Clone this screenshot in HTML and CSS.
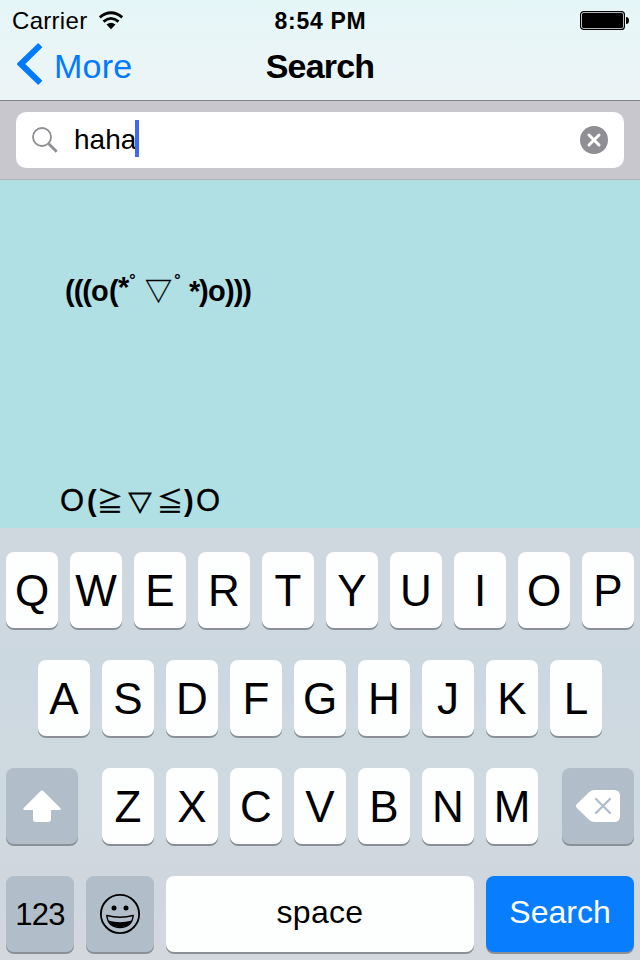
FILE: index.html
```
<!DOCTYPE html>
<html lang="en">
<head>
<meta charset="utf-8">
<title>Search</title>
<link rel="stylesheet" href="styles.css">
</head>
<body>
<header class="top">
  <div class="status">
    <div class="status-left"><span class="carrier">Carrier</span>
      <svg class="wifi" width="26" height="19" viewBox="0 0 26 19"><g fill="none" stroke="#000" stroke-width="2.8"><path d="M1.8 6.3Q13-2.8 24.2 6.3"/><path d="M5.5 10.6Q13 4.2 20.5 10.6"/></g><path d="M8.5 13.6Q13 10 17.5 13.6L13 18.3Z"/></svg>
    </div>
    <span class="time">8:54 PM</span>
    <svg class="battery" width="50" height="19" viewBox="0 0 50 19"><rect x=".6" y=".6" width="43.8" height="17.8" rx="3" fill="none" stroke="#000" stroke-width="1.2"/><rect x="2" y="2" width="41" height="15" rx="1.5"/><path d="M46 6q3 0 3 3.5t-3 3.5z"/></svg>
  </div>
  <div class="nav">
    <a class="back"><svg width="26" height="44" viewBox="0 0 26 44"><path d="M23.3 3.2L3.9 22L23.3 40.8" fill="none" stroke="#007aff" stroke-width="6"/></svg><span>More</span></a>
    <h1>Search</h1>
    <span></span>
  </div>
</header>
<div class="searchbar">
  <div class="field">
    <svg class="glass" width="26" height="26" viewBox="0 0 26 26" fill="none" stroke="#8e8e93"><circle cx="10" cy="10" r="9" stroke-width="1.8"/><path d="M16.7 16.7L24.7 24.7" stroke-width="2.8"/></svg>
    <span class="query">haha</span><span class="caret"></span>
    <svg class="clear" width="28" height="28" viewBox="0 0 28 28"><circle cx="14" cy="14" r="14" fill="#8e8e93"/><path d="M9 9L19 19M19 9L9 19" stroke="#fff" stroke-width="3" stroke-linecap="round"/></svg>
  </div>
</div>
<main class="results">
  <div class="face face-a"><span class="wa">(((</span><span class="wb">o</span><span class="wc">(</span><span class="wd star">*</span><span class="we deg">°</span><span class="wf tri">▽</span><span class="wg deg">°</span><span class="wh low">*</span><span class="wi">)</span><span class="wj">o</span><span class="wa">)))</span></div>
  <div class="face face-b"><span class="ba big">O</span><span class="bb">(</span><span class="bc sym">≧</span><span class="bd down">▽</span><span class="be sym">≦</span><span class="bf">)</span><span class="big">O</span></div>
</main>
<section class="keyboard">
  <div class="row"><b>Q</b><b>W</b><b>E</b><b>R</b><b>T</b><b>Y</b><b>U</b><b>I</b><b>O</b><b>P</b></div>
  <div class="row"><b>A</b><b>S</b><b>D</b><b>F</b><b>G</b><b>H</b><b>J</b><b>K</b><b>L</b></div>
  <div class="row">
    <b class="dark shift"><svg width="38" height="32" viewBox="0 0 38 32"><path d="M18 .8Q19 0 20 .8L37.3 18Q38.5 20 36.5 20H28V29Q28 32 25 32H13Q10 32 10 29V20H1.5Q-.5 20 .7 18Z" fill="#fff"/></svg></b>
    <b>Z</b><b>X</b><b>C</b><b>V</b><b>B</b><b>N</b><b>M</b>
    <b class="dark delete"><svg width="44" height="32" viewBox="0 0 44 32"><path d="M.7 14.3L13 2.2Q15.3 0 18.5 0H38Q44 0 44 6V26Q44 32 38 32H18.5Q15.3 32 13 29.8L.7 17.7Q-.7 16 .7 14.3Z" fill="#fff"/><path d="M20 9L34 23M34 9L20 23" stroke="#b0bdca" stroke-width="2.3" stroke-linecap="round"/></svg></b>
  </div>
  <div class="row">
    <b class="dark numbers">123</b>
    <b class="dark emoji"><svg width="40" height="40" viewBox="0 0 40 40"><circle cx="20" cy="20" r="19.1" fill="none" stroke="#000" stroke-width="1.8"/><circle cx="14" cy="14" r="2.5"/><circle cx="26" cy="14" r="2.5"/><path d="M6.8 21.5Q20 25 33.2 21.5Q32 33.5 20 33.5T6.8 21.5Z" fill="none" stroke="#000" stroke-width="1.4" stroke-linejoin="round"/><path d="M8.3 26.5Q20 29.8 31.7 26.5Q29 33.3 20 33.3T8.3 26.5Z"/></svg></b>
    <b class="space">space</b>
    <b class="go">Search</b>
  </div>
</section>
</body>
</html>
```
FILE: styles.css
```
* { box-sizing: border-box; }
body {
  margin: 0;
  width: 640px;
  height: 960px;
  display: flex;
  flex-direction: column;
  overflow: hidden;
  font-family: "Liberation Sans", sans-serif;
  color: #000;
}
svg { display: block; flex: none; }
.top {
  height: 101px;
  background: linear-gradient(#e5f6f7, #edf4f6);
  border-bottom: 1px solid #828586;
}
.status {
  height: 40px;
  display: grid;
  grid-template-columns: 1fr auto 1fr;
  align-items: center;
  padding: 0 11px 0 12px;
}
.status-left { display: flex; align-items: center; gap: 11px; }
.carrier { font-size: 24px; letter-spacing: .3px; line-height: 38px; padding-top: 2px; }
.time { font-size: 23px; font-weight: bold; letter-spacing: .7px; padding-top: 2px; }
.battery { justify-self: end; margin-right: -1px; }
.nav {
  height: 52px;
  display: grid;
  grid-template-columns: 1fr auto 1fr;
  align-items: center;
}
.back {
  display: flex;
  align-items: center;
  gap: 11px;
  margin-top: -4px;
  padding-left: 17px;
  height: 48px;
  color: #007aff;
  font-size: 34px;
  letter-spacing: .2px;
}
.back span { padding-top: 4px; }
h1 { margin: 0; font-size: 34px; line-height: 44px; letter-spacing: -.8px; }
.searchbar {
  height: 79px;
  padding: 11px 16px;
  background: #c7c7cd;
  border-bottom: 1px solid #b2b3b8;
}
.field {
  height: 56px;
  display: flex;
  align-items: center;
  padding: 0 16px;
  border-radius: 10px;
  background: #fff;
}
.query { margin-left: 16px; font-size: 28px; line-height: 40px; }
.caret { width: 4px; height: 37px; margin-top: -3px; margin-left: -1px; background: #4169f0; }
.clear { margin-left: auto; }
.results {
  height: 348px;
  background: #b0dfe4;
  padding-top: 88px;
  display: flex;
  flex-direction: column;
}
.face { display: flex; align-items: baseline; height: 46px; line-height: 46px; font-weight: bold; font-size: 29px; }
.face-a { padding-left: 65px; }
.face-b { padding-left: 60px; margin-top: 164px; }
.face span { flex: none; white-space: nowrap; }
.wa { width: 26px; letter-spacing: -1px; }
.wb { width: 18px; }
.wc { width: 9px; }
.wd { width: 11px; }
.we { width: 16px; }
.wf { width: 29px; }
.wg { width: 15px; }
.wh { width: 10px; }
.wi { width: 9px; }
.wj { width: 17px; }
.star { line-height: 1; transform: translateY(-4px); }
.deg { font-size: 17px; line-height: 1; transform: translateY(-15px); font-weight: normal; -webkit-text-stroke: .3px #000; }
.tri { font-family: "Noto Sans CJK JP", sans-serif; font-weight: normal; font-size: 27px; line-height: 1; -webkit-text-stroke: .3px #000; }
.big { font-weight: normal; font-size: 31px; -webkit-text-stroke: .3px #000; }
.ba { width: 27px; }
.bb { width: 10px; }
.bc { width: 30px; }
.bd { width: 30px; }
.be { width: 27px; }
.bf { width: 12px; }
.sym, .down { font-family: "Noto Sans CJK JP", sans-serif; font-weight: normal; font-size: 26px; line-height: 1; }
.down { font-weight: bold; -webkit-text-stroke: .8px #000; font-size: 24px; padding-left: 1px; }
.sym { -webkit-text-stroke: .4px #000; }
.keyboard {
  height: 432px;
  padding: 24px 6px 0;
  background: linear-gradient(#cfd8de, #ccd8e0 32%, #cfd9e0 65%, #d0d6de 80%, #d3d8df);
}
.row { height: 108px; display: flex; justify-content: center; gap: 12px; }
.row b {
  width: 52px;
  height: 76px;
  flex: none;
  display: flex;
  align-items: center;
  justify-content: center;
  border-radius: 8px;
  background: #fdfefe;
  box-shadow: 0 2px #8a9096;
  font-weight: normal;
  font-size: 44px;
  padding-top: 2px;
}
.row .dark { background: #b1bdc9; }
.row .shift { width: 72px; margin-right: 12px; padding: 0; }
.row .delete { width: 72px; margin-left: 12px; padding: 0; }
.row .numbers { width: 68px; font-size: 31px; letter-spacing: -.8px; }
.row .emoji { width: 68px; padding: 0; }
.row .space { width: 308px; font-size: 32px; padding: 0 0 4px; letter-spacing: .3px; }
.row .go { width: 148px; background: #087eff; color: #fff; font-size: 32px; padding: 0 0 4px; }
```
